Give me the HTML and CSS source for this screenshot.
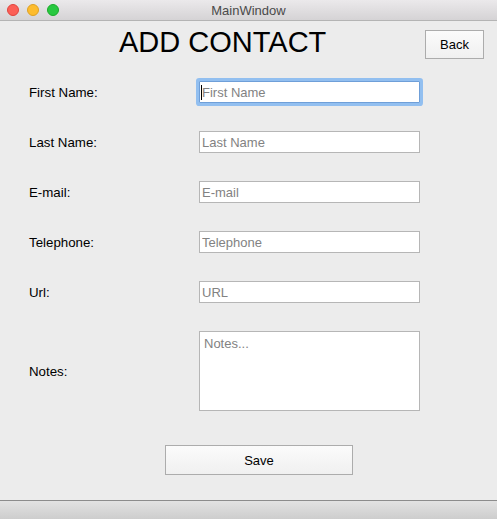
FILE: index.html
```html
<!DOCTYPE html>
<html>
<head>
<meta charset="utf-8">
<link rel="stylesheet" href="styles.css">
</head>
<body>
<div class="window">
  <div class="titlebar">
    <div class="lights">
      <span class="light red"></span>
      <span class="light yellow"></span>
      <span class="light green"></span>
    </div>
    <div class="wtitle">MainWindow</div>
  </div>
  <div class="content">
    <div class="header">
      <h1 class="heading">ADD CONTACT</h1>
      <button class="btn back">Back</button>
    </div>
    <div class="form">
      <label class="label">First Name:</label>
      <div class="focuswrap"><input class="field focused" placeholder="First Name"></div>
      <label class="label">Last Name:</label>
      <input class="field" placeholder="Last Name">
      <label class="label">E-mail:</label>
      <input class="field" placeholder="E-mail">
      <label class="label">Telephone:</label>
      <input class="field" placeholder="Telephone">
      <label class="label">Url:</label>
      <input class="field" placeholder="URL">
      <label class="label">Notes:</label>
      <textarea class="field notes" placeholder="Notes..."></textarea>
    </div>
    <div class="actions">
      <button class="btn save">Save</button>
    </div>
  </div>
  <div class="statusbar"></div>
</div>
</body>
</html>
```
FILE: styles.css
```css
* { box-sizing: border-box; }
html, body { margin: 0; padding: 0; }
body {
  width: 497px;
  height: 519px;
  overflow: hidden;
  background: #ececec;
  font-family: "Liberation Sans", Arial, sans-serif;
  font-size: 13px;
  color: #000;
}
.window {
  display: flex;
  flex-direction: column;
  height: 519px;
}
.titlebar {
  height: 21px;
  flex: none;
  display: flex;
  align-items: center;
  position: relative;
  background: linear-gradient(#ebe9eb, #d5d3d5);
  border-bottom: 1px solid #b4b4b4;
}
.lights {
  display: flex;
  gap: 8px;
  padding-left: 7px;
  padding-bottom: 1px;
}
.light {
  width: 12px;
  height: 12px;
  border-radius: 50%;
  display: block;
}
.red { background: #fc5f57; border: 1px solid #e0443e; }
.yellow { background: #fdbc2e; border: 1px solid #dea123; }
.green { background: #28c840; border: 1px solid #1aab29; }
.wtitle {
  position: absolute;
  left: 0;
  right: 0;
  top: 3px;
  text-align: center;
  color: #4a4a4a;
  font-size: 13px;
  pointer-events: none;
}
.content {
  flex: 1;
  display: flex;
  flex-direction: column;
}
.header {
  display: flex;
  align-items: center;
  height: 29px;
  margin-top: 9px;
  padding-left: 119px;
}
.heading {
  margin: -4px 0 0 0;
  font-weight: normal;
  font-size: 29px;
  font-family: "Liberation Sans", Arial, sans-serif;
  line-height: 29px;
  flex: 1;
}
.btn {
  font-family: "Liberation Sans", Arial, sans-serif;
  font-size: 13px;
  color: #000;
  background: linear-gradient(#fbfbfb, #f0f0f0);
  border: 1px solid #acacac;
  border-radius: 0;
  padding: 0;
}
.back {
  width: 59px;
  height: 29px;
  margin-right: 13px;
}
.form {
  display: grid;
  grid-template-columns: 170px 221px;
  grid-template-rows: 22px 22px 22px 22px 22px 80px;
  row-gap: 28px;
  padding-left: 29px;
  margin-top: 22px;
  align-items: center;
}
.label {
  font-size: 13.3px;
}
.field {
  display: block;
  width: 221px;
  height: 22px;
  margin: 0;
  border: 1px solid #b6b6b6;
  background: #fff;
  font-family: "Liberation Sans", Arial, sans-serif;
  font-size: 13px;
  padding: 0 2px;
  border-radius: 0;
  outline: none;
}
.field::placeholder { color: #828282; }
.focuswrap {
  position: relative;
  width: 221px;
  height: 22px;
}
.focuswrap::after {
  content: "";
  position: absolute;
  left: 2px;
  top: 4px;
  width: 1px;
  height: 15px;
  background: #000;
}
.focused {
  border: 1px solid #6f9fd8;
  box-shadow: 0 0 0 3px #92bff0;
  border-radius: 1px;
}
.notes {
  height: 80px;
  resize: none;
  padding: 4px 4px;
  font-size: 13px;
}
.actions {
  margin-top: 34px;
  padding-left: 165px;
}
.save {
  width: 188px;
  height: 30px;
}
.statusbar {
  height: 19px;
  flex: none;
  border-top: 1px solid #8c8c8c;
  background: linear-gradient(#e2e2e2, #cdcdcd);
}
```
